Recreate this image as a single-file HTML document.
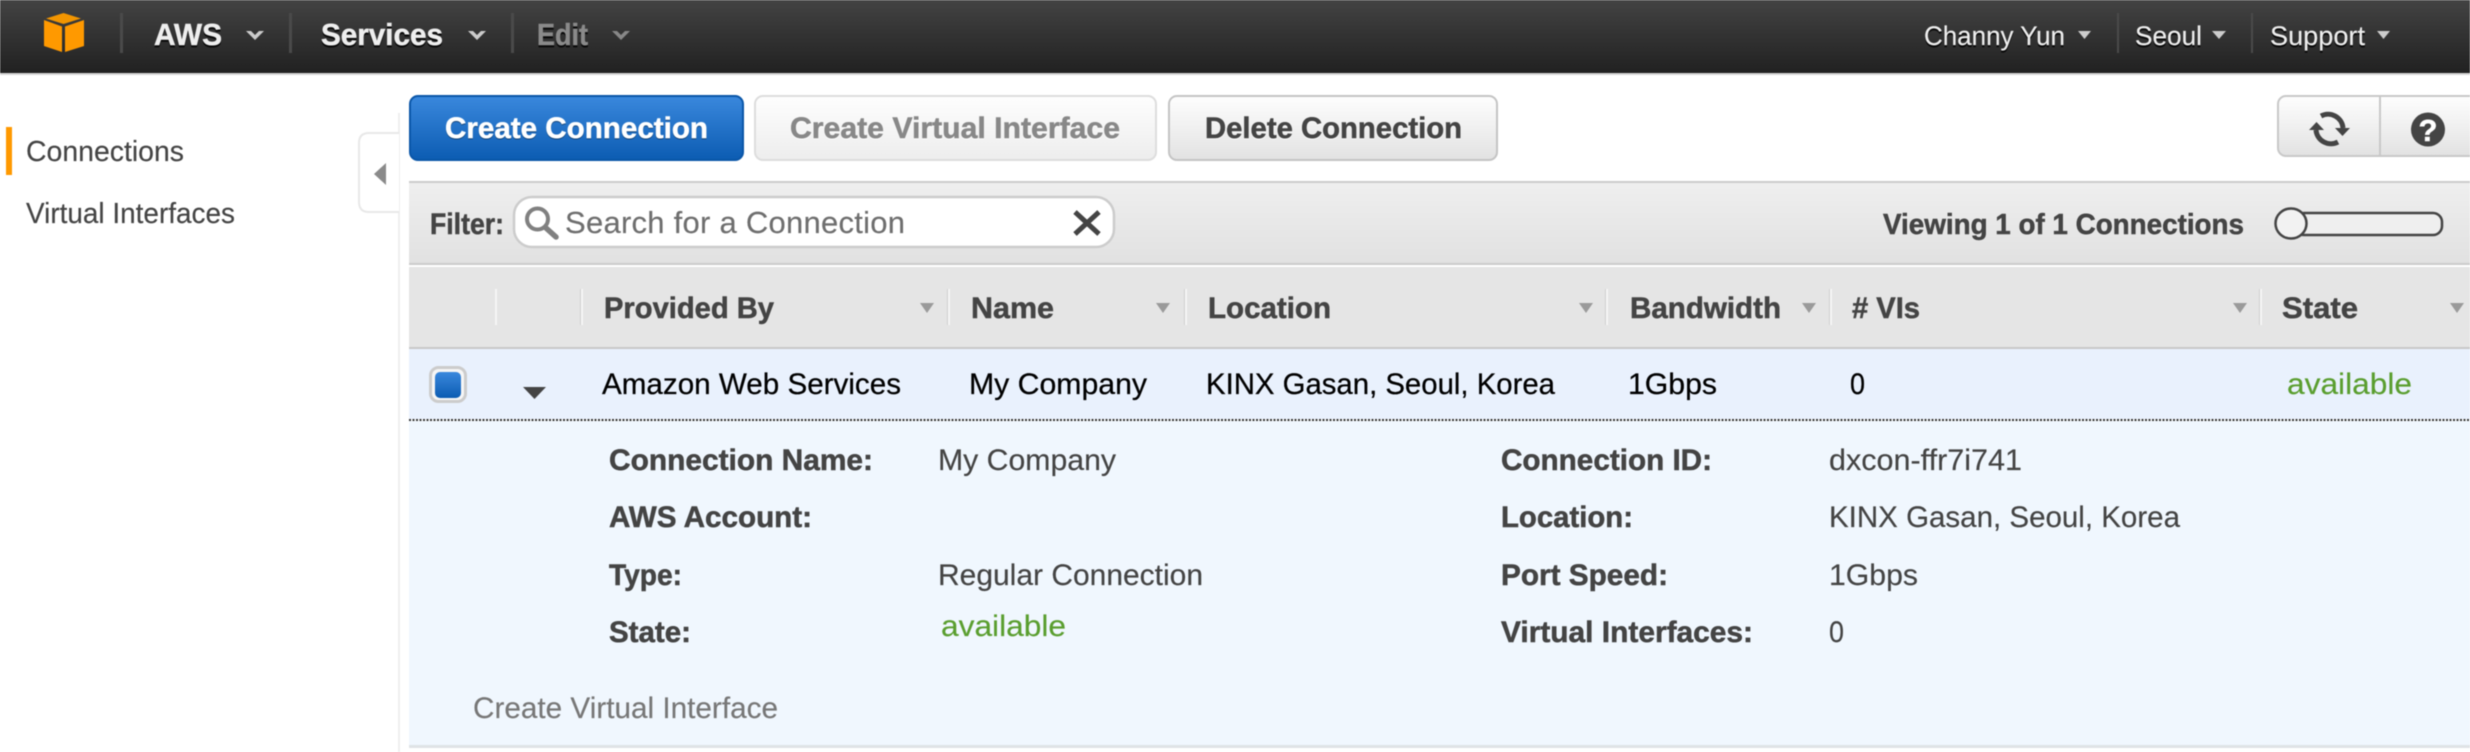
<!DOCTYPE html>
<html><head><meta charset="utf-8"><title>Connections</title>
<style>
html,body{margin:0;padding:0;background:#fff;width:2470px;height:752px;overflow:hidden}
svg{display:block;filter:blur(.45px)}
text{font-family:"Liberation Sans",Arial,sans-serif;font-size:30px;fill:#444;stroke:#444;stroke-width:.15px}
.b{font-weight:700;stroke-width:.5px}
.k{fill:#000;stroke:#000;stroke-width:.25px}
.g{fill:#5a9e2f;stroke:#5a9e2f}
.ds{filter:drop-shadow(0 2px 0 rgba(0,0,0,.85))}
.ws{filter:drop-shadow(0 1px 0 rgba(255,255,255,.9))}
</style></head><body>
<svg width="2470" height="752" viewBox="0 0 2470 752" xmlns="http://www.w3.org/2000/svg">
<defs>
<linearGradient id="hd" x1="0" y1="0" x2="0" y2="1"><stop offset="0" stop-color="#434343"/><stop offset="1" stop-color="#212121"/></linearGradient>
<linearGradient id="bl" x1="0" y1="0" x2="0" y2="1"><stop offset="0" stop-color="#3a88dd"/><stop offset="1" stop-color="#0c5cb2"/></linearGradient>
<linearGradient id="gr" x1="0" y1="0" x2="0" y2="1"><stop offset="0" stop-color="#fefefe"/><stop offset="1" stop-color="#e2e2e2"/></linearGradient>
<linearGradient id="gl" x1="0" y1="0" x2="0" y2="1"><stop offset="0" stop-color="#fefefe"/><stop offset="1" stop-color="#ededed"/></linearGradient>
<linearGradient id="fb" x1="0" y1="0" x2="0" y2="1"><stop offset="0" stop-color="#efefef"/><stop offset="1" stop-color="#e1e1e1"/></linearGradient>
</defs>

<!-- top bar -->
<rect x="0" y="0" width="2470" height="73" fill="url(#hd)"/>
<rect x="0" y="73" width="2470" height="2" fill="#d6d6d6"/>
<polygon points="63.5,13 81,18.5 63.5,24 46,18.5" fill="#f29500"/>
<polygon points="44,20 62,26.5 62,52 44,46" fill="#ff9900"/>
<polygon points="65,26.5 84,20 84,46 65,52" fill="#ff9900"/>
<rect x="120" y="13" width="3" height="40" fill="#4a4a4a"/>
<rect x="289" y="13" width="3" height="40" fill="#4a4a4a"/>
<rect x="511" y="13" width="3" height="40" fill="#4a4a4a"/>
<text class="b ds" x="154" y="45" textLength="68" lengthAdjust="spacingAndGlyphs" style="fill:#eee;stroke:#eee;font-size:31px">AWS</text>
<polygon points="246,31 251,31 255,35 259,31 264,31 255,40" fill="#ccc"/>
<text class="b ds" x="321" y="45" textLength="122" lengthAdjust="spacingAndGlyphs" style="fill:#eee;stroke:#eee;font-size:31px">Services</text>
<polygon points="468,31 473,31 477,35 481,31 486,31 477,40" fill="#ccc"/>
<text class="b ds" x="537" y="45" textLength="51" lengthAdjust="spacingAndGlyphs" style="fill:#8a8a8a;stroke:#8a8a8a;font-size:31px">Edit</text>
<polygon points="612,31 617,31 621,35 625,31 630,31 621,40" fill="#888"/>

<text class="ds" x="1924" y="45" textLength="141" lengthAdjust="spacingAndGlyphs" style="fill:#eee;stroke:#eee;font-size:27px">Channy Yun</text>
<polygon points="2078,31 2091,31 2084.5,39" fill="#ccc"/>
<rect x="2117" y="13" width="2" height="40" fill="#4a4a4a"/>
<text class="ds" x="2135" y="45" textLength="67" lengthAdjust="spacingAndGlyphs" style="fill:#eee;stroke:#eee;font-size:27px">Seoul</text>
<polygon points="2212,31 2226,31 2219,39" fill="#ccc"/>
<rect x="2251" y="13" width="2" height="40" fill="#4a4a4a"/>
<text class="ds" x="2270" y="45" textLength="95" lengthAdjust="spacingAndGlyphs" style="fill:#eee;stroke:#eee;font-size:27px">Support</text>
<polygon points="2377,31 2390,31 2383.5,39" fill="#ccc"/>

<!-- sidebar -->
<rect x="6" y="127" width="6" height="48" fill="#ff9900"/>
<text x="26" y="161" textLength="158" lengthAdjust="spacingAndGlyphs" style="font-size:29px">Connections</text>
<text x="26" y="223" textLength="209" lengthAdjust="spacingAndGlyphs" style="font-size:29px">Virtual Interfaces</text>
<rect x="398" y="113" width="2" height="639" fill="#eeeeee"/>
<path d="M399,133 H369 Q359,133 359,143 V202 Q359,212 369,212 H399" fill="#fff" stroke="#e8e8e8" stroke-width="2"/>
<polygon points="386,163 386,185 374,174" fill="#8a8a8a"/>

<!-- action buttons -->
<rect x="410" y="96" width="333" height="64" rx="8" fill="url(#bl)" stroke="#0a56a8" stroke-width="2"/>
<text class="b" x="445" y="138" textLength="263" lengthAdjust="spacingAndGlyphs" style="fill:#fff;stroke:#fff;filter:drop-shadow(0 1px 0 rgba(0,0,0,.4))">Create Connection</text>
<rect x="755" y="96" width="401" height="64" rx="8" fill="url(#gl)" stroke="#dddddd" stroke-width="2"/>
<text class="b ws" x="790" y="138" textLength="330" lengthAdjust="spacingAndGlyphs" style="fill:#888;stroke:#888">Create Virtual Interface</text>
<rect x="1169" y="96" width="328" height="64" rx="8" fill="url(#gr)" stroke="#c4c4c4" stroke-width="2"/>
<text class="b ws" x="1205" y="138" textLength="257" lengthAdjust="spacingAndGlyphs">Delete Connection</text>

<rect x="2278" y="96" width="240" height="60" rx="8" fill="url(#gr)" stroke="#c8c8c8" stroke-width="2"/>
<rect x="2379" y="96" width="2" height="60" fill="#c8c8c8"/>
<path d="M2321,116 A15,15 0 0 1 2343,128" fill="none" stroke="#444" stroke-width="5"/>
<polygon points="2335,128 2350,128 2342.5,136" fill="#444"/>
<path d="M2338,142 A15,15 0 0 1 2316,130" fill="none" stroke="#444" stroke-width="5"/>
<polygon points="2309,130 2324,130 2316.5,122" fill="#444"/>
<circle cx="2428" cy="129.5" r="17" fill="#444"/>
<text class="b" x="2428" y="141" text-anchor="middle" style="fill:#fff;stroke:#fff;font-size:31px">?</text>

<!-- filter bar -->
<rect x="409" y="181" width="2061" height="84" fill="url(#fb)"/>
<rect x="409" y="181" width="2061" height="2" fill="#cccccc"/>
<rect x="409" y="263" width="2061" height="2" fill="#cccccc"/>
<rect x="409" y="265" width="2061" height="2" fill="#ffffff"/>
<text class="b" x="430" y="234" textLength="74" lengthAdjust="spacingAndGlyphs">Filter:</text>
<rect x="514" y="197" width="600" height="50" rx="18" fill="#fff" stroke="#cccccc" stroke-width="2.5"/>
<circle cx="537.5" cy="219" r="10.5" fill="none" stroke="#808080" stroke-width="4"/>
<path d="M546,228 L556,237" stroke="#808080" stroke-width="5.5" stroke-linecap="round"/>
<text x="565" y="233" textLength="340" lengthAdjust="spacing" style="fill:#6e6e6e;stroke:#6e6e6e;font-size:31px">Search for a Connection</text>
<path d="M1075,212 L1099,234 M1099,212 L1075,234" stroke="#444" stroke-width="5"/>
<text class="b" x="1883" y="234" textLength="361" lengthAdjust="spacingAndGlyphs" style="font-size:29px">Viewing 1 of 1 Connections</text>
<rect x="2295" y="213" width="147" height="22" rx="9" fill="#efefef" stroke="#444" stroke-width="2.5"/>
<ellipse cx="2291" cy="223.5" rx="15.5" ry="15" fill="#f2f2f2" stroke="#444" stroke-width="2.5"/>

<!-- table header -->
<rect x="409" y="267" width="2061" height="80" fill="#e5e5e5"/>
<rect x="409" y="347" width="2061" height="2" fill="#c8c8c8"/>
<g fill="#f6f6f6">
<rect x="495" y="289" width="2" height="36"/><rect x="581" y="289" width="2" height="36"/><rect x="948" y="289" width="2" height="36"/><rect x="1185" y="289" width="2" height="36"/><rect x="1606" y="289" width="2" height="36"/><rect x="1830" y="289" width="2" height="36"/><rect x="2260" y="289" width="2" height="36"/>
</g>
<g fill="#cfcfcf">
<rect x="580" y="289" width="1" height="36"/><rect x="947" y="289" width="1" height="36"/><rect x="1184" y="289" width="1" height="36"/><rect x="1605" y="289" width="1" height="36"/><rect x="1829" y="289" width="1" height="36"/><rect x="2259" y="289" width="1" height="36"/>
</g>
<text class="b" x="604" y="318" textLength="170" lengthAdjust="spacingAndGlyphs">Provided By</text>
<text class="b" x="971" y="318" textLength="83" lengthAdjust="spacingAndGlyphs">Name</text>
<text class="b" x="1208" y="318" textLength="123" lengthAdjust="spacingAndGlyphs">Location</text>
<text class="b" x="1630" y="318" textLength="151" lengthAdjust="spacingAndGlyphs">Bandwidth</text>
<text class="b" x="1852" y="318" textLength="68" lengthAdjust="spacingAndGlyphs"># VIs</text>
<text class="b" x="2282" y="318" textLength="76" lengthAdjust="spacingAndGlyphs">State</text>
<g fill="#9a9a9a">
<polygon points="920,303 934,303 927,313"/><polygon points="1156,303 1170,303 1163,313"/><polygon points="1579,303 1593,303 1586,313"/><polygon points="1802,303 1816,303 1809,313"/><polygon points="2233,303 2247,303 2240,313"/><polygon points="2450,303 2464,303 2457,313"/>
</g>

<!-- selected row -->
<rect x="409" y="349" width="2061" height="70" fill="#e9f1fd"/>
<rect x="430.5" y="367.5" width="35" height="34" rx="8" fill="#f6f6f6" stroke="#cccccc" stroke-width="3"/>
<rect x="435" y="372" width="26" height="26" rx="5" fill="url(#bl)"/>
<polygon points="523,387 546,387 534.5,399" fill="#444"/>
<text class="k" x="602" y="394" textLength="299" lengthAdjust="spacingAndGlyphs">Amazon Web Services</text>
<text class="k" x="969" y="394" textLength="178" lengthAdjust="spacingAndGlyphs">My Company</text>
<text class="k" x="1206" y="394" textLength="349" lengthAdjust="spacingAndGlyphs">KINX Gasan, Seoul, Korea</text>
<text class="k" x="1628" y="394" textLength="89" lengthAdjust="spacingAndGlyphs">1Gbps</text>
<text class="k" x="1850" y="394" textLength="15" lengthAdjust="spacingAndGlyphs">0</text>
<text class="g" x="2287" y="394" textLength="125" lengthAdjust="spacingAndGlyphs">available</text>
<rect x="409" y="421" width="2061" height="324" fill="#f0f7fe"/>
<line x1="409" y1="420" x2="2470" y2="420" stroke="#333" stroke-width="2" stroke-dasharray="2 1.5"/>
<rect x="409" y="745" width="2061" height="3" fill="#dfe3e6"/>

<!-- details -->
<text class="b" x="609" y="470" textLength="264" lengthAdjust="spacingAndGlyphs">Connection Name:</text>
<text x="938" y="470" textLength="178" lengthAdjust="spacingAndGlyphs">My Company</text>
<text class="b" x="609" y="527" textLength="203" lengthAdjust="spacingAndGlyphs">AWS Account:</text>
<text class="b" x="609" y="585" textLength="73" lengthAdjust="spacingAndGlyphs">Type:</text>
<text x="938" y="585" textLength="265" lengthAdjust="spacingAndGlyphs">Regular Connection</text>
<text class="b" x="609" y="642" textLength="82" lengthAdjust="spacingAndGlyphs">State:</text>
<text class="g" x="941" y="636" textLength="125" lengthAdjust="spacingAndGlyphs">available</text>
<text class="b" x="1501" y="470" textLength="211" lengthAdjust="spacingAndGlyphs">Connection ID:</text>
<text x="1829" y="470" textLength="193" lengthAdjust="spacingAndGlyphs">dxcon-ffr7i741</text>
<text class="b" x="1501" y="527" textLength="132" lengthAdjust="spacingAndGlyphs">Location:</text>
<text x="1829" y="527" textLength="351" lengthAdjust="spacingAndGlyphs">KINX Gasan, Seoul, Korea</text>
<text class="b" x="1501" y="585" textLength="167" lengthAdjust="spacingAndGlyphs">Port Speed:</text>
<text x="1829" y="585" textLength="89" lengthAdjust="spacingAndGlyphs">1Gbps</text>
<text class="b" x="1501" y="642" textLength="252" lengthAdjust="spacingAndGlyphs">Virtual Interfaces:</text>
<text x="1829" y="642" textLength="15" lengthAdjust="spacingAndGlyphs">0</text>
<text x="473" y="718" textLength="305" lengthAdjust="spacingAndGlyphs" style="fill:#777;stroke:#777">Create Virtual Interface</text>
</svg>
</body></html>
